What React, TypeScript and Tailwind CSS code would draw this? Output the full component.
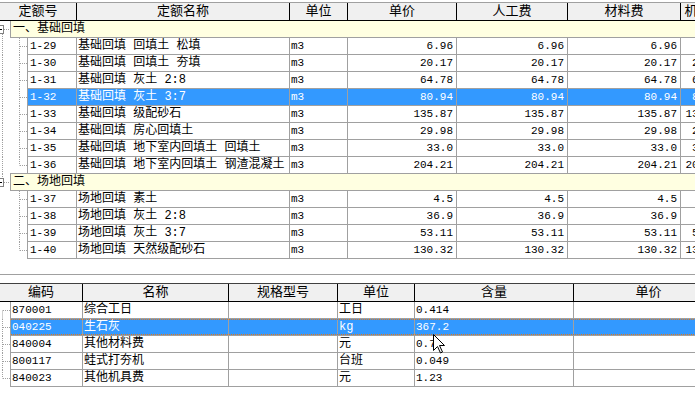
type Item = {
  code: string;
  name: string;
  unit: string;
  price: string;
  labor: string;
  material: string;
  machine: string;
};

const groups: { title: string; items: Item[] }[] = [
  {
    title: "一、基础回填",
    items: [
      { code: "1-29", name: "基础回填 回填土 松填", unit: "m3", price: "6.96", labor: "6.96", material: "6.96", machine: "" },
      { code: "1-30", name: "基础回填 回填土 夯填", unit: "m3", price: "20.17", labor: "20.17", material: "20.17", machine: "20.17" },
      { code: "1-31", name: "基础回填 灰土 2:8", unit: "m3", price: "64.78", labor: "64.78", material: "64.78", machine: "64.78" },
      { code: "1-32", name: "基础回填 灰土 3:7", unit: "m3", price: "80.94", labor: "80.94", material: "80.94", machine: "80.94" },
      { code: "1-33", name: "基础回填 级配砂石", unit: "m3", price: "135.87", labor: "135.87", material: "135.87", machine: "135.87" },
      { code: "1-34", name: "基础回填 房心回填土", unit: "m3", price: "29.98", labor: "29.98", material: "29.98", machine: "29.98" },
      { code: "1-35", name: "基础回填 地下室内回填土 回填土", unit: "m3", price: "33.0", labor: "33.0", material: "33.0", machine: "33.00" },
      { code: "1-36", name: "基础回填 地下室内回填土 钢渣混凝土", unit: "m3", price: "204.21", labor: "204.21", material: "204.21", machine: "204.21" },
    ],
  },
  {
    title: "二、场地回填",
    items: [
      { code: "1-37", name: "场地回填 素土", unit: "m3", price: "4.5", labor: "4.5", material: "4.5", machine: "" },
      { code: "1-38", name: "场地回填 灰土 2:8", unit: "m3", price: "36.9", labor: "36.9", material: "36.9", machine: "" },
      { code: "1-39", name: "场地回填 灰土 3:7", unit: "m3", price: "53.11", labor: "53.11", material: "53.11", machine: "53.11" },
      { code: "1-40", name: "场地回填 天然级配砂石", unit: "m3", price: "130.32", labor: "130.32", material: "130.32", machine: "130.32" },
    ],
  },
];

const resources = [
  { code: "870001", name: "综合工日", spec: "", unit: "工日", qty: "0.414", price: "" },
  { code: "040225", name: "生石灰", spec: "", unit: "kg", qty: "367.2", price: "" },
  { code: "840004", name: "其他材料费", spec: "", unit: "元", qty: "0.7", price: "" },
  { code: "800117", name: "蛙式打夯机", spec: "", unit: "台班", qty: "0.049", price: "" },
  { code: "840023", name: "其他机具费", spec: "", unit: "元", qty: "1.23", price: "" },
];

const cjk = "font-['Liberation_Mono','Noto_Sans_CJK_SC',monospace]";
const num = "font-['Liberation_Mono',monospace] text-[11px]";

function GroupGutter({ first }: { first: boolean }) {
  return (
    <svg width="10" height="17" className="shrink-0 block">
      {first ? (
        <line x1="2.5" y1="13" x2="2.5" y2="17" stroke="#a0a0a0" strokeDasharray="1 1" />
      ) : (
        <line x1="2.5" y1="0" x2="2.5" y2="4" stroke="#a0a0a0" strokeDasharray="1 1" />
      )}
      <line x1="4" y1="8.5" x2="10" y2="8.5" stroke="#a0a0a0" strokeDasharray="1 1" />
      <rect x="-4.5" y="4.5" width="8" height="8" fill="#fff" stroke="#808080" />
      <line x1="-2" y1="8.5" x2="2" y2="8.5" stroke="#000" />
    </svg>
  );
}

function ItemGutter({ root, last }: { root: boolean; last: boolean }) {
  return (
    <svg width="27" height="17" className="shrink-0 block">
      {root && <line x1="2.5" y1="0" x2="2.5" y2="17" stroke="#a0a0a0" strokeDasharray="1 1" />}
      <line x1="19.5" y1="0" x2="19.5" y2={last ? 8.5 : 17} stroke="#a0a0a0" strokeDasharray="1 1" />
      <line x1="20" y1="8.5" x2="27" y2="8.5" stroke="#a0a0a0" strokeDasharray="1 1" />
    </svg>
  );
}

function ResGutter({ first, last }: { first: boolean; last: boolean }) {
  return (
    <svg width="10" height="17" className="shrink-0 block">
      <line x1="2.5" y1={first ? 8.5 : 0} x2="2.5" y2={last ? 8.5 : 17} stroke="#a0a0a0" strokeDasharray="1 1" />
      <line x1="3" y1="8.5" x2="10" y2="8.5" stroke="#a0a0a0" strokeDasharray="1 1" />
    </svg>
  );
}

function Cursor() {
  return (
    <svg width="13" height="20" viewBox="0 0 13 20" className="absolute left-[433px] top-[334px]">
      <path d="M0.5 0.5 L0.5 16.5 L4.5 12.5 L7.5 19 L9.5 18 L6.5 11.5 L11.5 11.5 Z" fill="#fff" stroke="#000" strokeLinejoin="miter" />
    </svg>
  );
}

export default function App() {
  return (
    <div className={`relative w-[695px] h-[396px] overflow-hidden bg-white pt-[2px] text-black ${cjk}`}>
      {/* quota list */}
      <div className="flex h-[19px] w-[740px] border-t border-b border-t-[#a0a0a0] border-b-black bg-[#f0f0f0] text-[13px] leading-[17px]">
        <div className="w-[77px] shrink-0 border-r border-black text-center">定额号</div>
        <div className="w-[213px] shrink-0 border-r border-black text-center">定额名称</div>
        <div className="w-[58px] shrink-0 border-r border-black text-center">单位</div>
        <div className="w-[109px] shrink-0 border-r border-black text-center">单价</div>
        <div className="w-[111px] shrink-0 border-r border-black text-center">人工费</div>
        <div className="w-[113px] shrink-0 border-r border-black text-center">材料费</div>
        <div className="w-[47px] shrink-0 border-r border-black text-center">机械费</div>
      </div>

      {groups.map((g, gi) => (
        <div key={g.title}>
          <div className={`flex w-[740px] ${gi > 0 ? "-mt-px h-[18px]" : "h-[17px]"}`}>
            <div className={gi > 0 ? "pt-px" : ""}>
              <GroupGutter first={gi === 0} />
            </div>
            <div
              className={`flex-1 bg-[#ffffe1] border-l border-b border-[#a0a0a0] pl-[2px] text-[12px] leading-[16px] ${gi > 0 ? "border-t" : ""}`}
            >
              {g.title}
            </div>
          </div>
          {g.items.map((it, i) => {
            const sel = it.code === "1-32";
            return (
              <div key={it.code} className="flex h-[17px] w-[740px]">
                <ItemGutter root={gi === 0} last={i === g.items.length - 1} />
                <div
                  className={`flex border-l border-b border-[#a0a0a0] leading-[16px] ${sel ? "bg-[#3399ff] text-white" : ""}`}
                >
                  <div className={`w-[49px] shrink-0 border-r border-[#a0a0a0] pl-[2px] ${num}`}>{it.code}</div>
                  <div className="w-[213px] shrink-0 border-r border-[#a0a0a0] pl-[1px] text-[12px] whitespace-nowrap overflow-hidden">
                    {it.name}
                  </div>
                  <div className={`w-[58px] shrink-0 border-r border-[#a0a0a0] pl-[1px] ${num}`}>{it.unit}</div>
                  <div className={`w-[109px] shrink-0 border-r border-[#a0a0a0] pr-[3px] text-right ${num}`}>{it.price}</div>
                  <div className={`w-[111px] shrink-0 border-r border-[#a0a0a0] pr-[3px] text-right ${num}`}>{it.labor}</div>
                  <div className={`w-[113px] shrink-0 border-r border-[#a0a0a0] pr-[3px] text-right ${num}`}>{it.material}</div>
                  <div className={`w-[47px] shrink-0 border-r border-[#a0a0a0] pr-[2px] text-right whitespace-nowrap ${num}`}>
                    {it.machine}
                  </div>
                </div>
              </div>
            );
          })}
        </div>
      ))}

      <div className="h-[16px] border-b border-[#a0a0a0]" />
      <div className="h-[8px]" />

      {/* resource list */}
      <div className="flex h-[19px] w-[740px] border-t border-b border-t-[#404040] border-b-black bg-[#f0f0f0] text-[13px] leading-[17px]">
        <div className="w-[83px] shrink-0 border-r border-black text-center">编码</div>
        <div className="w-[146px] shrink-0 border-r border-black text-center">名称</div>
        <div className="w-[109px] shrink-0 border-r border-black text-center">规格型号</div>
        <div className="w-[77px] shrink-0 border-r border-black text-center">单位</div>
        <div className="w-[159px] shrink-0 border-r border-black text-center">含量</div>
        <div className="w-[150px] shrink-0 border-r border-black text-center">单价</div>
      </div>
      {resources.map((r, i) => {
        const sel = r.code === "040225";
        return (
          <div key={r.code} className="flex h-[17px] w-[740px]">
            <ResGutter first={i === 0} last={i === resources.length - 1} />
            <div
              className={`relative flex border-l border-b border-[#a0a0a0] leading-[16px] ${sel ? "bg-[#3399ff] text-white" : ""}`}
            >
              <div className={`w-[72px] shrink-0 border-r border-[#a0a0a0] pl-[1px] ${num}`}>{r.code}</div>
              <div className="w-[146px] shrink-0 border-r border-[#a0a0a0] pl-[1px] text-[12px]">{r.name}</div>
              <div className="w-[109px] shrink-0 border-r border-[#a0a0a0] pl-[1px] text-[12px]">{r.spec}</div>
              <div className="w-[77px] shrink-0 border-r border-[#a0a0a0] pl-[1px] text-[12px]">{r.unit}</div>
              <div className={`w-[159px] shrink-0 border-r border-[#a0a0a0] pl-[1px] ${num}`}>{r.qty}</div>
              <div className={`w-[150px] shrink-0 border-r border-[#a0a0a0] pr-[3px] text-right ${num}`}>{r.price}</div>
              {sel && (
                <div className="pointer-events-none absolute inset-0 border-y border-dotted border-[#e0781c]" />
              )}
            </div>
          </div>
        );
      })}

      <Cursor />
    </div>
  );
}
